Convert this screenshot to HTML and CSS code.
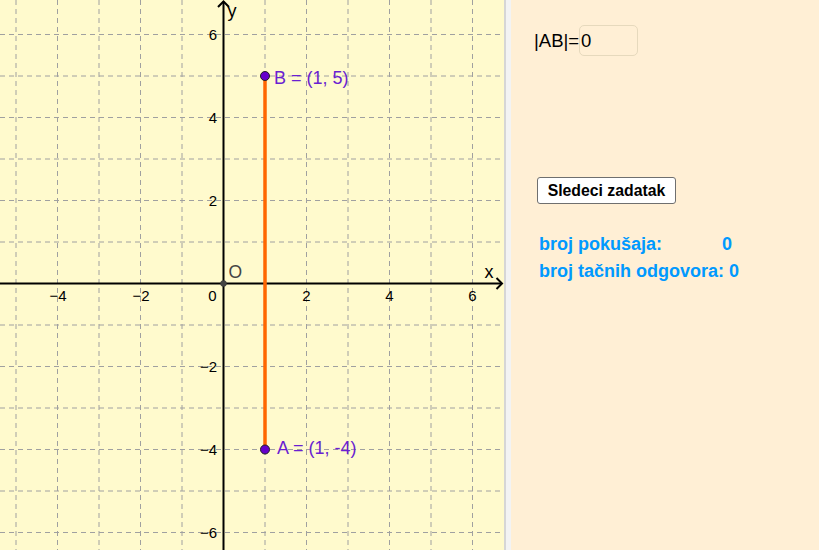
FILE: index.html
```html
<!DOCTYPE html>
<html>
<head>
<meta charset="utf-8">
<link rel="stylesheet" href="styles.css">
</head>
<body>
<div class="app">
  <div class="graphics">
    <svg class="plot" width="504" height="550" viewBox="0 0 504 550">
      <rect x="0" y="0" width="504" height="550" fill="#fffacd"/>
      <g class="grid">
        <line x1="16" y1="0" x2="16" y2="550"/>
        <line x1="57.5" y1="0" x2="57.5" y2="550"/>
        <line x1="99" y1="0" x2="99" y2="550"/>
        <line x1="140.5" y1="0" x2="140.5" y2="550"/>
        <line x1="182" y1="0" x2="182" y2="550"/>
        <line x1="265" y1="0" x2="265" y2="550"/>
        <line x1="306.5" y1="0" x2="306.5" y2="550"/>
        <line x1="348" y1="0" x2="348" y2="550"/>
        <line x1="389.5" y1="0" x2="389.5" y2="550"/>
        <line x1="431" y1="0" x2="431" y2="550"/>
        <line x1="472.5" y1="0" x2="472.5" y2="550"/>
        <line x1="0" y1="34.5" x2="504" y2="34.5"/>
        <line x1="0" y1="76" x2="504" y2="76"/>
        <line x1="0" y1="117.5" x2="504" y2="117.5"/>
        <line x1="0" y1="159" x2="504" y2="159"/>
        <line x1="0" y1="200.5" x2="504" y2="200.5"/>
        <line x1="0" y1="242" x2="504" y2="242"/>
        <line x1="0" y1="325" x2="504" y2="325"/>
        <line x1="0" y1="366.5" x2="504" y2="366.5"/>
        <line x1="0" y1="408" x2="504" y2="408"/>
        <line x1="0" y1="449.5" x2="504" y2="449.5"/>
        <line x1="0" y1="491" x2="504" y2="491"/>
        <line x1="0" y1="532.5" x2="504" y2="532.5"/>
      </g>
      <g class="axes">
        <line x1="0" y1="283.5" x2="502" y2="283.5"/>
        <line x1="223.5" y1="550" x2="223.5" y2="1.5"/>
        <polyline points="496.5,278 502,283.5 496.5,289"/>
        <polyline points="218,7 223.5,1.5 229,7"/>
      </g>
      <g class="ticks">
        <text x="58" y="301" text-anchor="middle">−4</text>
        <text x="141" y="301" text-anchor="middle">−2</text>
        <text x="216.5" y="301" text-anchor="end">0</text>
        <text x="306.5" y="301" text-anchor="middle">2</text>
        <text x="389.5" y="301" text-anchor="middle">4</text>
        <text x="472.5" y="301" text-anchor="middle">6</text>
        <text x="217" y="40" text-anchor="end">6</text>
        <text x="217" y="123" text-anchor="end">4</text>
        <text x="217" y="206" text-anchor="end">2</text>
        <text x="217" y="372" text-anchor="end">−2</text>
        <text x="217" y="455" text-anchor="end">−4</text>
        <text x="217" y="538" text-anchor="end">−6</text>
      </g>
      <text class="axis-name" x="484.5" y="278">x</text>
      <text class="axis-name" x="227.5" y="17">y</text>
      <line class="segment" x1="265" y1="76" x2="265" y2="449.5"/>
      <circle class="origin" cx="223.5" cy="283.5" r="3"/>
      <text class="origin-label" x="228.5" y="277.5">O</text>
      <circle class="point" cx="265" cy="76" r="4.5"/>
      <circle class="point" cx="265" cy="449.5" r="4.5"/>
      <text class="point-label" x="274" y="84.3">B = (1, 5)</text>
      <text class="point-label" x="277" y="453.5">A = (1, -4)</text>
    </svg>
  </div>
  <div class="divider"></div>
  <div class="panel">
    <div class="length-row">
      <span class="length-label">|AB|=</span>
      <span class="length-input">0</span>
    </div>
    <button class="next-btn">Sledeci zadatak</button>
    <div class="stats">
      <div class="stat-row"><span class="stat-label">broj pokušaja:</span><span>0</span></div>
      <div class="stat-row">broj tačnih odgovora: 0</div>
    </div>
  </div>
</div>
</body>
</html>
```
FILE: styles.css
```css
html, body {
  margin: 0;
  padding: 0;
}
body {
  width: 819px;
  height: 550px;
  overflow: hidden;
  font-family: "Liberation Sans", Arial, sans-serif;
}
.app {
  display: flex;
  width: 819px;
  height: 550px;
}
.graphics {
  width: 504px;
  height: 550px;
  flex: none;
}
.plot {
  display: block;
}
.grid line {
  stroke: #a0a0a0;
  stroke-width: 1;
  stroke-dasharray: 5 4;
}
.axes line, .axes polyline {
  stroke: #000;
  stroke-width: 2;
  fill: none;
}
.ticks text {
  font-family: "Liberation Sans", Arial, sans-serif;
  font-size: 15px;
  fill: #000;
}
.axis-name {
  font-family: "Liberation Sans", Arial, sans-serif;
  font-size: 18px;
  fill: #000;
}
.segment {
  stroke: #ff6600;
  stroke-width: 3.5;
}
.origin {
  fill: #444;
  stroke: #333;
  stroke-width: 0.5;
}
.origin-label {
  font-family: "Liberation Sans", Arial, sans-serif;
  font-size: 17.5px;
  fill: #444;
}
.point {
  fill: #6600cc;
  stroke: #222;
  stroke-width: 1;
}
.point-label {
  font-family: "Liberation Sans", Arial, sans-serif;
  font-size: 18px;
  fill: #6a1fd1;
}
.divider {
  width: 7px;
  flex: none;
  box-sizing: border-box;
  border-left: 2px solid #d6d6d6;
  background: #f3f3f3;
}
.panel {
  flex: 1;
  background: #ffefd5;
  display: flex;
  flex-direction: column;
  align-items: flex-start;
  padding-left: 23px;
}
.length-row {
  display: flex;
  align-items: center;
  margin-top: 25px;
  font-size: 18.5px;
  color: #000;
}
.length-input {
  box-sizing: border-box;
  width: 59px;
  height: 31px;
  border: 1px solid #e6d9bd;
  border-radius: 5px;
  padding-left: 1px;
  display: flex;
  align-items: center;
}
.next-btn {
  margin-top: 121px;
  margin-left: 3px;
  box-sizing: border-box;
  width: 139px;
  height: 27px;
  padding: 0;
  background: #fff;
  border: 1px solid #6f6f6f;
  border-radius: 3px;
  font-family: "Liberation Sans", Arial, sans-serif;
  font-weight: bold;
  font-size: 15.8px;
  color: #000;
}
.stats {
  margin-top: 27px;
  margin-left: 5px;
  color: #0099ff;
  font-weight: bold;
  font-size: 18px;
  line-height: 27px;
}
.stat-row {
  display: flex;
}
.stat-label {
  width: 183px;
}
```
